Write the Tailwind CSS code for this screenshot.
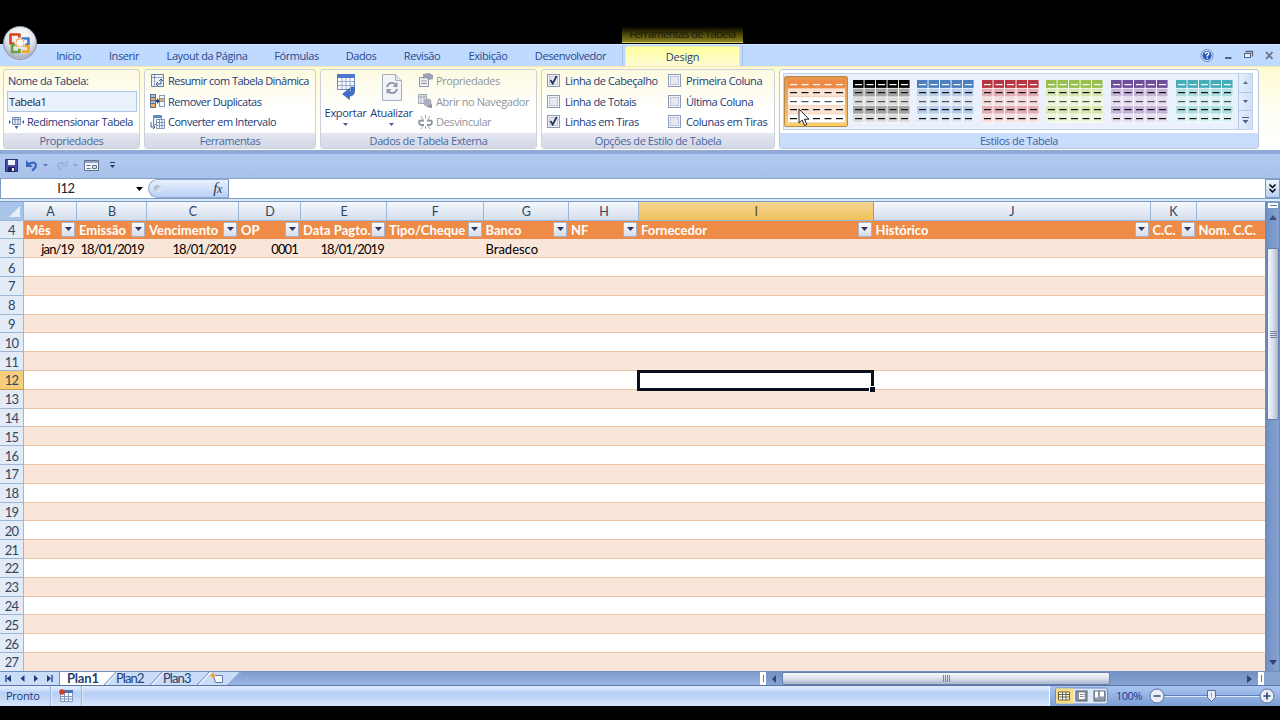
<!DOCTYPE html>
<html lang="pt-BR">
    <head>
        <meta charset="UTF-8" />
        <meta name="viewport" content="width=device-width, initial-scale=1.0" />
        <title>Planilha - Ferramentas de Tabela</title>
        <script src="https://cdn.jsdelivr.net/npm/@tailwindcss/browser@4"></script>
    </head>
    <body class="w-[1280px] h-[720px] overflow-hidden bg-black flex flex-col font-['Open_Sans',sans-serif] text-[11px] leading-none tracking-[-0.42px] text-[#1b3a78] whitespace-nowrap [&_svg]:shrink-0">
        <!-- title bar -->
        <header class="relative h-[44px] shrink-0 flex items-end">
            <div class="ml-[622px] mb-px w-[121px] h-[19px] flex items-center justify-center bg-linear-to-b from-black via-[#3f3b08] to-[#8c8420] border-b border-[#d8cf6a] text-[#1c1a08] tracking-[-0.55px]">Ferramentas de Tabela</div>
            <svg class="absolute left-[1px] top-[24px] z-10" width="38" height="38" viewBox="0 0 38 38">
                <defs>
                    <radialGradient id="orb" cx="50%" cy="30%" r="75%">
                        <stop offset="0" stop-color="#ffffff" />
                        <stop offset="0.55" stop-color="#e3e6ec" />
                        <stop offset="0.85" stop-color="#a9b0be" />
                        <stop offset="1" stop-color="#e8ecf4" />
                    </radialGradient>
                </defs>
                <circle cx="19" cy="19" r="16.500" fill="url(#orb)" stroke="#8c95a8" />
                <g fill="none" stroke-width="2.6" stroke-linejoin="round">
                    <path d="M14 19.500h-4.500v-9h9v4" stroke="#d8431c" />
                    <path d="M20.500 14.500h7v6h-3.500" stroke="#3d7fc4" />
                    <path d="M14.500 21h-3.500v7h7.500v-3.500" stroke="#6aa23a" />
                    <path d="M21 27.500h6.500v-5.500h-4" stroke="#f0a81c" />
                    <path d="M15.500 15.500h7v7h-7z" stroke="#f4b27a" stroke-width="1.200" />
                    <path d="M19 13v12M13 19h12" stroke="#ffffff" stroke-width="1" />
                </g>
            </svg>
        </header>

        <!-- ribbon tabs -->
        <nav class="h-[22px] shrink-0 flex bg-[#bfd9ff] border-t border-[#d9e8ff] text-[#2b4a8c]">
            <div class="ml-[41px] w-[55px] flex items-center justify-center">Início</div>
            <div class="w-[56px] flex items-center justify-center">Inserir</div>
            <div class="w-[110px] flex items-center justify-center">Layout da Página</div>
            <div class="w-[69px] flex items-center justify-center">Fórmulas</div>
            <div class="w-[60px] flex items-center justify-center">Dados</div>
            <div class="w-[62px] flex items-center justify-center">Revisão</div>
            <div class="w-[70px] flex items-center justify-center">Exibição</div>
            <div class="w-[95px] flex items-center justify-center">Desenvolvedor</div>
            <div class="ml-[4px] w-[121px] px-[2px] border-x border-[#a9bfe4]">
                <div class="mt-[1px] h-[20px] flex items-center justify-center pb-px rounded-t-[3px] border border-b-0 border-[#f3eeb0] bg-linear-to-b from-[#ffff9c] to-[#fffbd6] text-[#1f3f70] tracking-[-0.2px]">Design</div>
            </div>
            <div class="ml-auto mr-[5px] flex items-center">
                <svg width="76" height="20" viewBox="0 0 76 20">
                    <circle cx="8" cy="9.500" r="6" fill="#dfeafc" stroke="#6d88bd" />
                    <circle cx="8" cy="9.500" r="4.600" fill="#2b59b8" />
                    <path d="M6.300 8q0-1.700 1.800-1.700t1.700 1.500q0 1-1.600 1.800v.9M8.200 11.500v1.200" fill="none" stroke="#fff" stroke-width="1.300" />
                    <path d="M26 12h6.500" stroke="#5a6478" stroke-width="2" />
                    <path d="M47 5.500h6.500v5M46.500 5.500h7.500" fill="none" stroke="#5a6478" stroke-width="1.300" />
                    <rect x="45.500" y="7.500" width="6" height="4" fill="#e8effa" stroke="#5a6478" />
                    <path d="M67 6l6.500 7M73.500 6l-6.500 7" stroke="#6a6f80" stroke-width="1.800" />
                </svg>
            </div>
        </nav>

        <!-- ribbon -->
        <section class="h-[85px] shrink-0 flex pl-[3px] pt-[2px] pb-[2px] gap-[4px] border-t border-[#f0e9b8] border-b border-b-[#8fa9d0] bg-linear-to-b from-[#fffbd0] via-[#fffef2] to-white">
            <div class="w-[137px] h-[80px] flex flex-col rounded-[3px] border border-[#cdd0dc] bg-linear-to-b from-[#fdfae0] via-white to-white overflow-hidden">
                <div class="flex-1 flex flex-col pl-[3px]">
                    <div class="h-[21px] flex items-center pl-[1px]">Nome da Tabela:</div>
                    <div class="w-[130px] h-[21px] flex items-center pl-[1px] pb-px border border-[#b0c4e4] bg-[#eaf2fd] text-[#26183a]">Tabela1</div>
                    <div class="h-[19px] flex items-center gap-[3px] pl-[2px]">
                        <svg width="15" height="14" viewBox="0 0 15 14"><path d="M3.500 2.500h8v7h-8zM3.500 4.500h8M6 3v6M9 3v6" fill="#e6ecf6" stroke="#7d8fae" /><path d="M0 5l2 2-2 2zM15 5l-2 2 2 2zM5.500 11h4l-2 3z" fill="#2d5fb0" /></svg>
                        <span>Redimensionar Tabela</span>
                    </div>
                </div>
                <div class="h-[15px] flex items-center justify-center bg-linear-to-b from-[#e4e7f0] to-[#d3d8e6] text-[#4c66a0]">Propriedades</div>
            </div>

            <div class="w-[172px] h-[80px] flex flex-col rounded-[3px] border border-[#cdd0dc] bg-linear-to-b from-[#fdfae0] via-white to-white overflow-hidden">
                <div class="flex-1 flex flex-col pl-[5px]">
                    <div class="h-[20.7px] flex items-center gap-[3px] tracking-[-0.52px]">
                        <svg width="15" height="14" viewBox="0 0 15 14"><path d="M1.500 1.500h12v12h-12z" fill="#eef2f9" stroke="#6b7f9e" /><path d="M1.500 4.500h12M4.500 1.500v12" stroke="#6b7f9e" stroke-dasharray="2 1" /><path d="M7 11h4v-4M9 8l2-2 2 2M8 9l-2 2 2 2" fill="none" stroke="#3a5a8c" /></svg>
                        <span>Resumir com Tabela Dinâmica</span>
                    </div>
                    <div class="h-[20.7px] flex items-center gap-[3px] tracking-[-0.5px]">
                        <svg width="15" height="14" viewBox="0 0 15 14"><path d="M0 0h6v14h-6z" fill="#5a7090" /><path d="M1 1h4v2h-4zM1 7h4v2h-4z" fill="#a9bddb" /><path d="M1 4h4v2h-4zM1 10h4v3h-4z" fill="#eeb256" /><path d="M9 1h6v12h-6z" fill="#8799b5" /><path d="M10 2h4v2h-4zM10 8h4v4h-4z" fill="#f4f7fb" /><path d="M10 5h4v2h-4z" fill="#eeb256" /><path d="M6 6h1v-2l3 3-3 3v-2h-1z" fill="#2c4878" /></svg>
                        <span>Remover Duplicatas</span>
                    </div>
                    <div class="h-[20.7px] flex items-center gap-[3px] tracking-[-0.47px]">
                        <svg width="15" height="14" viewBox="0 0 15 14"><path d="M3.500.5h8v9h-8z" fill="#e9effa" stroke="#6c86b4" /><path d="M3 1h9v2h-9z" fill="#5f87cc" /><path d="M6.500 4.500h8v9h-8zM6.500 7.500h8M6.500 10.500h8M9.500 4.500v9M12 4.500v9" fill="#fff" stroke="#8296ba" /><path d="M1 7v5h3M3 10l2 2-2 2" fill="none" stroke="#40587f" /></svg>
                        <span>Converter em Intervalo</span>
                    </div>
                </div>
                <div class="h-[15px] flex items-center justify-center bg-linear-to-b from-[#e4e7f0] to-[#d3d8e6] text-[#4c66a0]">Ferramentas</div>
            </div>

            <div class="w-[217px] h-[80px] flex flex-col rounded-[3px] border border-[#cdd0dc] bg-linear-to-b from-[#fdfae0] via-white to-white overflow-hidden">
                <div class="flex-1 flex pl-[3px]">
                    <div class="w-[43px] flex flex-col items-center pt-[3px]">
                        <svg width="20" height="29" viewBox="0 0 20 29"><path d="M1.500 1.500h17v15h-17z" fill="#f7f9fd" stroke="#7189b8" /><path d="M1 1h18v4h-18z" fill="#4b78c8" /><path d="M2 8.500h16M2 12.500h16M6 5v11M10 5v11M14 5v11" stroke="#9aabc9" /><path d="M18.500 14v4q0 5-5 5v3.500l-7-5.500 7-5.500v3.500q1.500 0 1.500-1.500v-3.500z" fill="#3f6fce" stroke="#2c52a0" stroke-width=".6" /></svg>
                        <span class="mt-[5px] tracking-[-0.3px]">Exportar</span>
                        <svg class="mt-[5px]" width="5" height="3" viewBox="0 0 5 3"><path d="M0 0h5l-2.500 3z" fill="#4a5f88" /></svg>
                    </div>
                    <div class="w-[49px] flex flex-col items-center pt-[3px]">
                        <svg width="22" height="29" viewBox="0 0 22 29"><path d="M1.500 1.500h13l6 6v20h-19z" fill="#f1f3f7" stroke="#a3aec0" /><path d="M14.500 1.500v6h6" fill="#dfe3ea" stroke="#a3aec0" /><path d="M6 14q1-4 5-4 3 0 4 2M16 16q-1 4-5 4-3 0-4-2" fill="none" stroke="#8e99ab" stroke-width="2" /><path d="M16.500 9v5h-5zM5.500 21v-5h5z" fill="#8e99ab" /></svg>
                        <span class="mt-[5px] tracking-[-0.3px]">Atualizar</span>
                        <svg class="mt-[5px]" width="5" height="3" viewBox="0 0 5 3"><path d="M0 0h5l-2.500 3z" fill="#4a5f88" /></svg>
                    </div>
                    <div class="flex flex-col pl-[2px] text-[#9294a0]">
                        <div class="h-[20.7px] flex items-center gap-[3px]">
                            <svg width="15" height="14" viewBox="0 0 15 14"><path d="M1.500 4.500h9v9h-9zM3 8h6M3 10.500h6" fill="#f0f1f4" stroke="#8d95a5" /><path d="M5 1l6-1 4 2v4l-4 1-3-2-3 1z" fill="#9aa1b0" /></svg>
                            <span>Propriedades</span>
                        </div>
                        <div class="h-[20.7px] flex items-center gap-[3px]">
                            <svg width="15" height="14" viewBox="0 0 15 14"><path d="M.5.500h8v9h-8zM.5 3h8M3 1v8M6 1v8" fill="#eef0f4" stroke="#a0a7b5" /><circle cx="9.500" cy="8.500" r="4" fill="#a9b0bd" /><path d="M8 13l6 1v-4z" fill="#8b93a3" /></svg>
                            <span>Abrir no Navegador</span>
                        </div>
                        <div class="h-[20.7px] flex items-center gap-[3px]">
                            <svg width="15" height="14" viewBox="0 0 15 14"><path d="M6 5.500h-3q-2 0-2 2t2 2.500h3M9 5.500h3q2 0 2 2t-2 2.500h-3" fill="none" stroke="#8d95a5" stroke-width="1.800" /><path d="M7.500 0v3.500M3 1l2 3M12 1l-2 3M7.500 14v-3M3 14l2-2.500M12 14l-2-2.500" stroke="#9da4b2" /></svg>
                            <span>Desvincular</span>
                        </div>
                    </div>
                </div>
                <div class="h-[15px] flex items-center justify-center bg-linear-to-b from-[#e4e7f0] to-[#d3d8e6] text-[#4c66a0]">Dados de Tabela Externa</div>
            </div>

            <div class="w-[234px] h-[80px] flex flex-col rounded-[3px] border border-[#cdd0dc] bg-linear-to-b from-[#fdfae0] via-white to-white overflow-hidden">
                <div id="options" class="flex-1 grid grid-cols-[121px_1fr] grid-rows-[20.7px_20.7px_20.7px] pl-[5px]"></div>
                <div class="h-[15px] flex items-center justify-center bg-linear-to-b from-[#e4e7f0] to-[#d3d8e6] text-[#4c66a0]">Opções de Estilo de Tabela</div>
            </div>

            <div class="w-[480px] h-[80px] flex flex-col rounded-[3px] border border-[#b4c6e2] bg-white overflow-hidden">
                <div class="relative flex-1 pt-[3px] pl-[3px]">
                    <div class="w-[470px] h-[57px] flex border border-[#c0d2ee] bg-[#eaf1fd]">
                        <div id="gallery" class="flex-1 flex gap-[0.6px]"></div>
                        <div class="w-[14px] flex flex-col border-l border-[#b4c8ea] bg-linear-to-r from-[#e6eefb] to-[#cfdff7]">
                            <div class="flex-1 flex items-center justify-center"><svg width="5" height="3" viewBox="0 0 5 3"><path d="M0 3h5l-2.500-3z" fill="#5a6f9c" /></svg></div>
                            <div class="flex-1 flex items-center justify-center border-y border-[#b4c8ea]"><svg width="5" height="3" viewBox="0 0 5 3"><path d="M0 0h5l-2.500 3z" fill="#4a5f8c" /></svg></div>
                            <div class="flex-1 flex items-center justify-center"><svg width="7" height="7" viewBox="0 0 7 7"><path d="M0 .5h7" stroke="#4a5f8c" /><path d="M.5 3h6l-3 3.500z" fill="#4a5f8c" /></svg></div>
                        </div>
                    </div>
                    <svg class="absolute left-[18px] top-[38px]" width="13" height="19" viewBox="0 0 13 19"><path d="M1 1v14l3.200-3 2.300 5.500 2.300-1-2.300-5.300h4.500z" fill="#fff" stroke="#222" stroke-width="1" /></svg>
                </div>
                <div class="h-[15px] flex items-center justify-center bg-[#c9defc] text-[#3f5fa4]">Estilos de Tabela</div>
            </div>
        </section>

        <!-- quick access toolbar -->
        <div class="h-[28px] shrink-0 flex items-center pb-[2px] pl-[5px] border-t-[3px] border-[#8faad6] border-b border-b-[#86a3c8] bg-linear-to-b from-[#b3caf0] to-[#a8c1ea]">
            <svg width="13" height="13" viewBox="0 0 13 13"><path d="M.5.500h12v12h-12z" fill="#4a4cb0" stroke="#2e2f80" /><path d="M3 1h7v5h-7z" fill="#f3f5fc" /><path d="M3 8h7v5h-7z" fill="#23245c" /><path d="M7 9h2v3h-2z" fill="#f3f5fc" /></svg>
            <svg class="ml-[7px]" width="13" height="13" viewBox="0 0 13 13"><path d="M3 5.500q6-3.500 7.500-.5t-3.500 6.500" fill="none" stroke="#3b67c2" stroke-width="2.200" /><path d="M1 1v7h7z" fill="#3b67c2" /></svg>
            <svg class="ml-[5px]" width="5" height="3" viewBox="0 0 5 3"><path d="M0 0h5l-2.500 2.500z" fill="#5670a4" /></svg>
            <svg class="ml-[8px]" width="13" height="13" viewBox="0 0 13 13"><path d="M9 5.500q-5-3-6.500-.5t2.500 6" fill="none" stroke="#96aed6" stroke-width="1.800" /><path d="M11.500 1.500v6h-6z" fill="#a9bfe2" stroke="#8ba5d0" stroke-width=".5" /></svg>
            <svg class="ml-[4px]" width="5" height="3" viewBox="0 0 5 3"><path d="M0 0h5l-2.500 2.500z" fill="#869fce" /></svg>
            <svg class="ml-[6px]" width="15" height="13" viewBox="0 0 15 13"><path d="M.5 1.500h14v10h-14z" fill="#f2f5fa" stroke="#5f6f8c" /><path d="M1 2h13v2h-13z" fill="#8da4cc" /><path d="M2.500 6.500h4M2.500 9.500h4" stroke="#5f6f8c" /><path d="M8.500 6.500h4v3h-4z" fill="#d4dcea" stroke="#5f6f8c" /></svg>
            <svg class="ml-[11px]" width="5" height="6" viewBox="0 0 5 6"><path d="M0 .5h5" stroke="#223a6c" /><path d="M0 3h5l-2.500 3z" fill="#223a6c" /></svg>
        </div>

        <!-- formula bar -->
        <div class="h-[19px] shrink-0 flex bg-white">
            <div class="w-[148px] flex items-center border-l border-[#7c9cc8] text-[#222]">
                <span class="w-[130px] text-center font-['Lato',sans-serif] text-[13px]">I12</span>
                <svg class="ml-[5px]" width="7" height="4" viewBox="0 0 7 4"><path d="M0 0h7l-3.500 4z" fill="#000" /></svg>
            </div>
            <div class="w-[81px] flex items-center justify-between pl-[5px] pr-[6px] rounded-l-full border border-[#8ea9d0] border-r-[#7590bd] bg-linear-to-b from-[#e9f2ff] to-[#b9d1f5]">
                <span class="w-[7px] h-[7px] rounded-full bg-linear-to-br from-[#8fa2c2] to-white"></span>
                <span class="pb-px font-['Liberation_Serif',serif] italic text-[15px] text-[#2c3450]">f<span class="text-[12px]">x</span></span>
            </div>
            <div class="flex-1"></div>
            <div class="w-[15px] flex items-center justify-center border border-[#7c9cc8] bg-linear-to-b from-[#eef4fe] to-[#b9cff2]">
                <svg width="7" height="9" viewBox="0 0 7 9"><path d="M.5.500l3 3 3-3M.5 5l3 3 3-3" fill="none" stroke="#000" stroke-width="1.500" /></svg>
            </div>
        </div>
        <div class="h-[4px] shrink-0 border-y border-[#7c9cc8] bg-[#dce9fb]"></div>

        <!-- worksheet -->
        <main class="h-[469px] shrink-0 flex font-['Lato',sans-serif] tracking-normal">
            <div class="w-[1265px] overflow-hidden flex flex-col bg-white">
                <div id="columns" class="h-[18.6px] shrink-0 flex border-b border-[#9eb6d6] bg-linear-to-b from-[#f6f9fd] to-[#d3ddec]"></div>
                <div id="rows" class="relative flex flex-col"></div>
            </div>
            <div class="w-[15px] flex flex-col border-l-2 border-r border-[#6c8cc0] bg-linear-to-r from-[#7391c4] to-[#86a3d2]">
                <div class="h-[7px] flex items-center justify-center bg-white border border-[#7c9cc8]"><span class="w-[7px] h-px bg-[#5a7a9c]"></span></div>
                <div class="h-[39px] flex justify-center pt-[6px]"><svg width="8" height="5" viewBox="0 0 8 5"><path d="M0 5h8l-4-5z" fill="#3d5580" /></svg></div>
                <div class="h-[172px] flex items-center justify-center rounded-[2px] border border-[#6681ae] bg-linear-to-r from-[#f4f6fa] via-[#d8dfeb] to-[#a9b6ce]">
                    <span class="w-[7px] h-[7px] flex flex-col justify-between"><i class="h-px bg-[#74839f]"></i><i class="h-px bg-[#74839f]"></i><i class="h-px bg-[#74839f]"></i><i class="h-px bg-[#74839f]"></i></span>
                </div>
                <div class="flex-1 flex items-end justify-center pb-[6px]"><svg width="8" height="5" viewBox="0 0 8 5"><path d="M0 0h8l-4 5z" fill="#2f4674" /></svg></div>
            </div>
        </main>

        <!-- sheet tabs and horizontal scroll -->
        <div class="h-[15px] shrink-0 flex border-t border-[#6f8fc2] border-b border-b-[#5a76a8] bg-linear-to-b from-[#7d9bcf] to-[#9db8e4] font-['Lato',sans-serif] text-[13px] tracking-normal text-[#1f3f74]">
            <div class="relative w-[760px] flex">
                <svg class="absolute left-0 top-0" width="242" height="13" viewBox="0 0 242 13">
                    <path d="M0 0h241l-13 13h-228z" fill="#c9dcf8" />
                    <path d="M59 0h57l-12 13h-45z" fill="#fff" />
                    <path d="M59.500 0v13M116 0l-12 13M162 0l-12 13M209 0l-12 13M240 0l-12 13" fill="none" stroke="#6f8fc2" />
                    <path d="M118 0l-12 13M164 0l-12 13M211 0l-12 13" fill="none" stroke="#fff" />
                    <path d="M11 3v7l-4.500-3.500zM24.500 3v7l-4-3.500zM34 3v7l4-3.500zM47 3v7l4-3.500z" fill="#1d3c78" />
                    <path d="M6 3v7M52 3v7" stroke="#1d3c78" stroke-width="1.300" />
                    <path d="M213.500 3.500h9v7h-7z" fill="#f6f9fe" stroke="#667da6" />
                    <path d="M213 0l1 2.500 2.500 1-2.500 1-1 2.500-1-2.500-2.500-1 2.500-1z" fill="#ee9a2c" />
                </svg>
                <div class="relative flex items-center">
                    <span class="ml-[67px] w-[32px] font-bold tracking-[-0.2px]">Plan1</span>
                    <span class="ml-[17px] w-[28px] tracking-[-0.9px]">Plan2</span>
                    <span class="ml-[19px] w-[28px] tracking-[-0.9px]">Plan3</span>
                </div>
            </div>
            <div class="w-[6px] flex items-center justify-center bg-white"><span class="w-px h-[7px] bg-[#5a7a9c]"></span></div>
            <div class="flex-1 flex bg-linear-to-b from-[#7391c4] to-[#86a3d2]">
                <div class="w-[16px] flex items-center justify-center"><svg width="4" height="8" viewBox="0 0 4 8"><path d="M4 0v8l-4-4z" fill="#2f4674" /></svg></div>
                <div class="w-[328px] flex items-center justify-center gap-px rounded-[2px] border border-[#6681ae] bg-linear-to-b from-[#f6f8fb] via-[#dce1ea] to-[#a9b6ce]">
                    <i class="w-px h-[7px] bg-[#74839f]"></i><i class="w-px h-[7px] bg-[#74839f]"></i><i class="w-px h-[7px] bg-[#74839f]"></i><i class="w-px h-[7px] bg-[#74839f]"></i>
                </div>
                <div class="flex-1 flex items-center justify-end pr-[6px]"><svg width="5" height="8" viewBox="0 0 5 8"><path d="M0 0v8l5-4z" fill="#2f4674" /></svg></div>
            </div>
            <div class="w-[6px] flex items-center justify-center bg-white"><span class="w-px h-[7px] bg-[#5a7a9c]"></span></div>
            <div class="w-[16px] bg-[#86a3d2]"></div>
        </div>

        <!-- status bar -->
        <footer class="h-[20px] shrink-0 flex items-center bg-linear-to-b from-[#dce9fd] from-10% via-[#b6cff5] via-35% to-[#d6e4fa]">
            <span class="ml-[6px] w-[44px] pb-[2px] tracking-[-0.25px]">Pronto</span>
            <span class="w-[2px] h-full bg-white/50 border-l border-[#9db6dd]"></span>
            <svg class="ml-[7px] mb-[2px]" width="14" height="13" viewBox="0 0 14 13"><path d="M1.500 1.500h12v11h-12zM1.500 7.500h12M1.500 10h12M5.500 4v8M9.500 4v8" fill="#f8fafe" stroke="#8095ba" /><path d="M3 1h11v3h-11z" fill="#4e71b4" /><circle cx="3" cy="3" r="2.800" fill="#cf3b2c" /></svg>
            <span class="ml-[8px] w-[2px] h-full bg-white/50 border-l border-[#9db6dd]"></span>
            <div class="ml-auto w-[231px] h-full flex items-center pb-px border-l border-white bg-linear-to-b from-[#a9c4ef] to-[#7d9fd6]">
                <svg class="ml-[5px]" width="53" height="18" viewBox="0 0 53 18">
                    <rect x=".5" y="1" width="52" height="16" rx="2" fill="#dce7f8" stroke="#6d8bbf" />
                    <path d="M1 1.500h17v15h-17z" fill="#fadc82" />
                    <path d="M3.500 5h11v8h-11zM3.500 7.500h11M3.500 10h11M7.500 5v8M11 5v8" fill="#fff" stroke="#6a6440" />
                    <rect x="21" y="4" width="11" height="10" fill="#8f95a2" stroke="#5b6270" />
                    <path d="M24 5.500h5.500v6.500h-5.500z" fill="#fff" />
                    <path d="M25 7.500h3.500M25 9.500h3.500" stroke="#888" />
                    <rect x="39" y="4" width="11" height="10" fill="#9399a6" stroke="#5b6270" />
                    <path d="M40 4.500h3v6h-3zM45 4.500h4v5h-4z" fill="#fff" />
                </svg>
                <span class="ml-[8px] w-[26px] pb-px text-[#1c3a90] tracking-[-0.5px]">100%</span>
                <svg class="ml-[6px]" width="130" height="18" viewBox="0 0 130 18">
                    <path d="M15 8.500h98" stroke="#5f80b8" /><path d="M15 9.500h98" stroke="#dbe7fa" />
                    <circle cx="9" cy="9" r="7" fill="#e6edf8" stroke="#5a6f98" />
                    <circle cx="119" cy="9" r="7" fill="#e6edf8" stroke="#5a6f98" />
                    <path d="M5.500 9h7M115.500 9h7M119 5.500v7" stroke="#3a4a6c" stroke-width="1.700" />
                    <path d="M59.500 3.500h8v7l-4 4-4-4z" fill="#e6edf8" stroke="#5a6f98" /><path d="M63.500 5.500v5" stroke="#8ea0c2" />
                </svg>
            </div>
        </footer>

        <script>
            // column letter, width, table header, value in row 5, right aligned
            const columns = [
                ["A", 53, "Mês", "jan/19", true],
                ["B", 70, "Emissão", "18/01/2019", true],
                ["C", 92, "Vencimento", "18/01/2019", true],
                ["D", 62, "OP", "0001", true],
                ["E", 86, "Data Pagto.", "18/01/2019", true],
                ["F", 96.5, "Tipo/Cheque", "", false],
                ["G", 85.5, "Banco", "Bradesco", false],
                ["H", 70, "NF", "", false],
                ["I", 234.5, "Fornecedor", "", false],
                ["J", 277, "Histórico", "", false],
                ["K", 46, "C.C.", "", false],
                ["", 110, "Nom. C.C.", "", false],
            ];

            document.getElementById("columns").innerHTML =
                `<div class="w-[24px] shrink-0 flex items-end justify-end p-[3px] border-r border-[#9eb6d6] bg-[#a9c4e9]"><svg width="11" height="11" viewBox="0 0 11 11"><path d="M11 0v11h-11z" fill="#e6effb" /></svg></div>` +
                columns
                    .map(([letter, width]) => {
                        const look = letter === "I" ? "bg-linear-to-b from-[#f5d592] to-[#efc258] border-[#c99a3c] text-[#5c4a20]" : "border-[#9eb6d6] text-[#34465e]";
                        return `<div class="shrink-0 flex items-center justify-center pt-[3px] pl-px border-r text-[12.5px] ${look}" style="width:${width}px">${letter}</div>`;
                    })
                    .join("");

            const filter = `<span class="ml-auto mr-[2px] mb-px w-[14px] h-[15px] flex items-center justify-center rounded-[1px] border border-[#a9b4c8] bg-linear-to-b from-[#fafbfd] to-[#d5dce8]"><svg width="7" height="4" viewBox="0 0 7 4"><path d="M0 0h7l-3.500 4z" fill="#2a3566" /></svg></span>`;

            let html = "";
            for (let n = 4; n <= 27; n++) {
                let cells = "";
                if (n === 4) {
                    cells = columns.map(([letter, width, title]) => `<div class="shrink-0 flex items-center pl-[2px] pt-px font-bold text-white" style="width:${width}px"><span class="pt-px">${title}</span>${letter ? filter : ""}</div>`).join("");
                } else if (n === 5) {
                    cells = columns.map(([, width, , value, right]) => `<div class="shrink-0 flex items-center pt-[2px] ${right ? "justify-end pr-[3px] tracking-[-0.85px]" : "pl-[2px]"}" style="width:${width}px">${value}</div>`).join("");
                }
                const stripe = n === 4 ? "bg-[#ed8b47] border-[#ed8b47]" : n % 2 ? "bg-[#fae6d9] border-[#eec3a6]" : "bg-white border-[#eec3a6]";
                const head = n === 12 ? "bg-[#f6cf7c] border-[#c99a3c]" : "bg-[#e3ebf6] border-[#9eb6d6]";
                html += `<div class="h-[18.8px] shrink-0 flex text-[13px] text-black"><div class="w-[24px] shrink-0 flex items-center justify-center pt-[2px] border-r border-b text-[#34465e] tracking-[-0.7px] ${head}">${n}</div><div class="flex-1 flex border-b ${stripe}">${cells}</div></div>`;
            }
            // active cell outline
            html += `<div class="absolute left-[637px] top-[149px] w-[237px] h-[21px] border-[3px] border-[#0a0f1e]"><span class="absolute -right-[4px] -bottom-[4px] w-[6px] h-[6px] bg-[#0a0f1e] border-t border-l border-white"></span></div>`;
            document.getElementById("rows").innerHTML = html;

            const options = [
                ["Linha de Cabeçalho", true], ["Primeira Coluna", false],
                ["Linha de Totais", false], ["Última Coluna", false],
                ["Linhas em Tiras", true], ["Colunas em Tiras", false],
            ];
            document.getElementById("options").innerHTML = options
                .map(([label, on]) => `<div class="flex items-center gap-[5px]"><svg width="13" height="13" viewBox="0 0 13 13"><rect x=".5" y=".5" width="12" height="12" fill="#f2f4f8" stroke="#8f9cb8" /><rect x="2.500" y="2.500" width="8" height="8" fill="#e6e9f0" stroke="#c0c7d6" />${on ? '<path d="M3.500 6l2.200 3.500 4-7.500" fill="none" stroke="#26365e" stroke-width="1.800" />' : ""}</svg><span>${label}</span></div>`)
                .join("");

            // header, strong stripe, light stripe
            const styles = [
                ["#ed8b47", "#fbe3d3", "#ffffff"],
                ["#000000", "#a3a3a3", "#dcdcdc"],
                ["#4b7fc0", "#b7cdea", "#dde8f6"],
                ["#b83440", "#e2aeb4", "#f5dde0"],
                ["#98c04c", "#d5e6b0", "#edf5dc"],
                ["#6f4f9c", "#c4b4da", "#e6def0"],
                ["#45aebb", "#aedde2", "#daf1f3"],
            ];
            document.getElementById("gallery").innerHTML = styles
                .map(([top, strong, light], i) => {
                    let shapes = "";
                    for (let r = 0; r < 5; r++) {
                        const y = r * 8.6;
                        const fill = r === 0 ? top : r % 2 ? strong : light;
                        const dash = r === 0 ? "#ffffff" : r === 2 ? "#505050" : "#101010";
                        if (i === 0) shapes += `<rect x="0" y="${y}" width="57" height="8.6" fill="${fill}" /><rect x="0" y="${y + 8}" width="57" height="0.6" fill="#f0b48c" />`;
                        for (let c = 0; c < 5; c++) {
                            const x = c * 11.5;
                            if (i) shapes += `<rect x="${x}" y="${y}" width="10.6" height="7.9" fill="${fill}" />`;
                            shapes += `<rect x="${x + 2}" y="${Math.round(y + 3.5)}" width="7" height="1.2" fill="${dash}" />`;
                        }
                    }
                    const frame = i ? "pt-[6px] pl-[4px]" : "mt-[2px] h-[51px] rounded-[2px] border border-[#b58a4a] bg-linear-to-b from-[#e8954a] via-[#f0ae5c] to-[#fbd269] pt-[3px] pl-[3px]";
                    return `<div class="w-[64px] shrink-0 ${frame}"><svg width="57" height="43" viewBox="0 0 57 43"><rect width="57" height="43" fill="#ffffff" />${shapes}</svg></div>`;
                })
                .join("");
        </script>
    </body>
</html>
